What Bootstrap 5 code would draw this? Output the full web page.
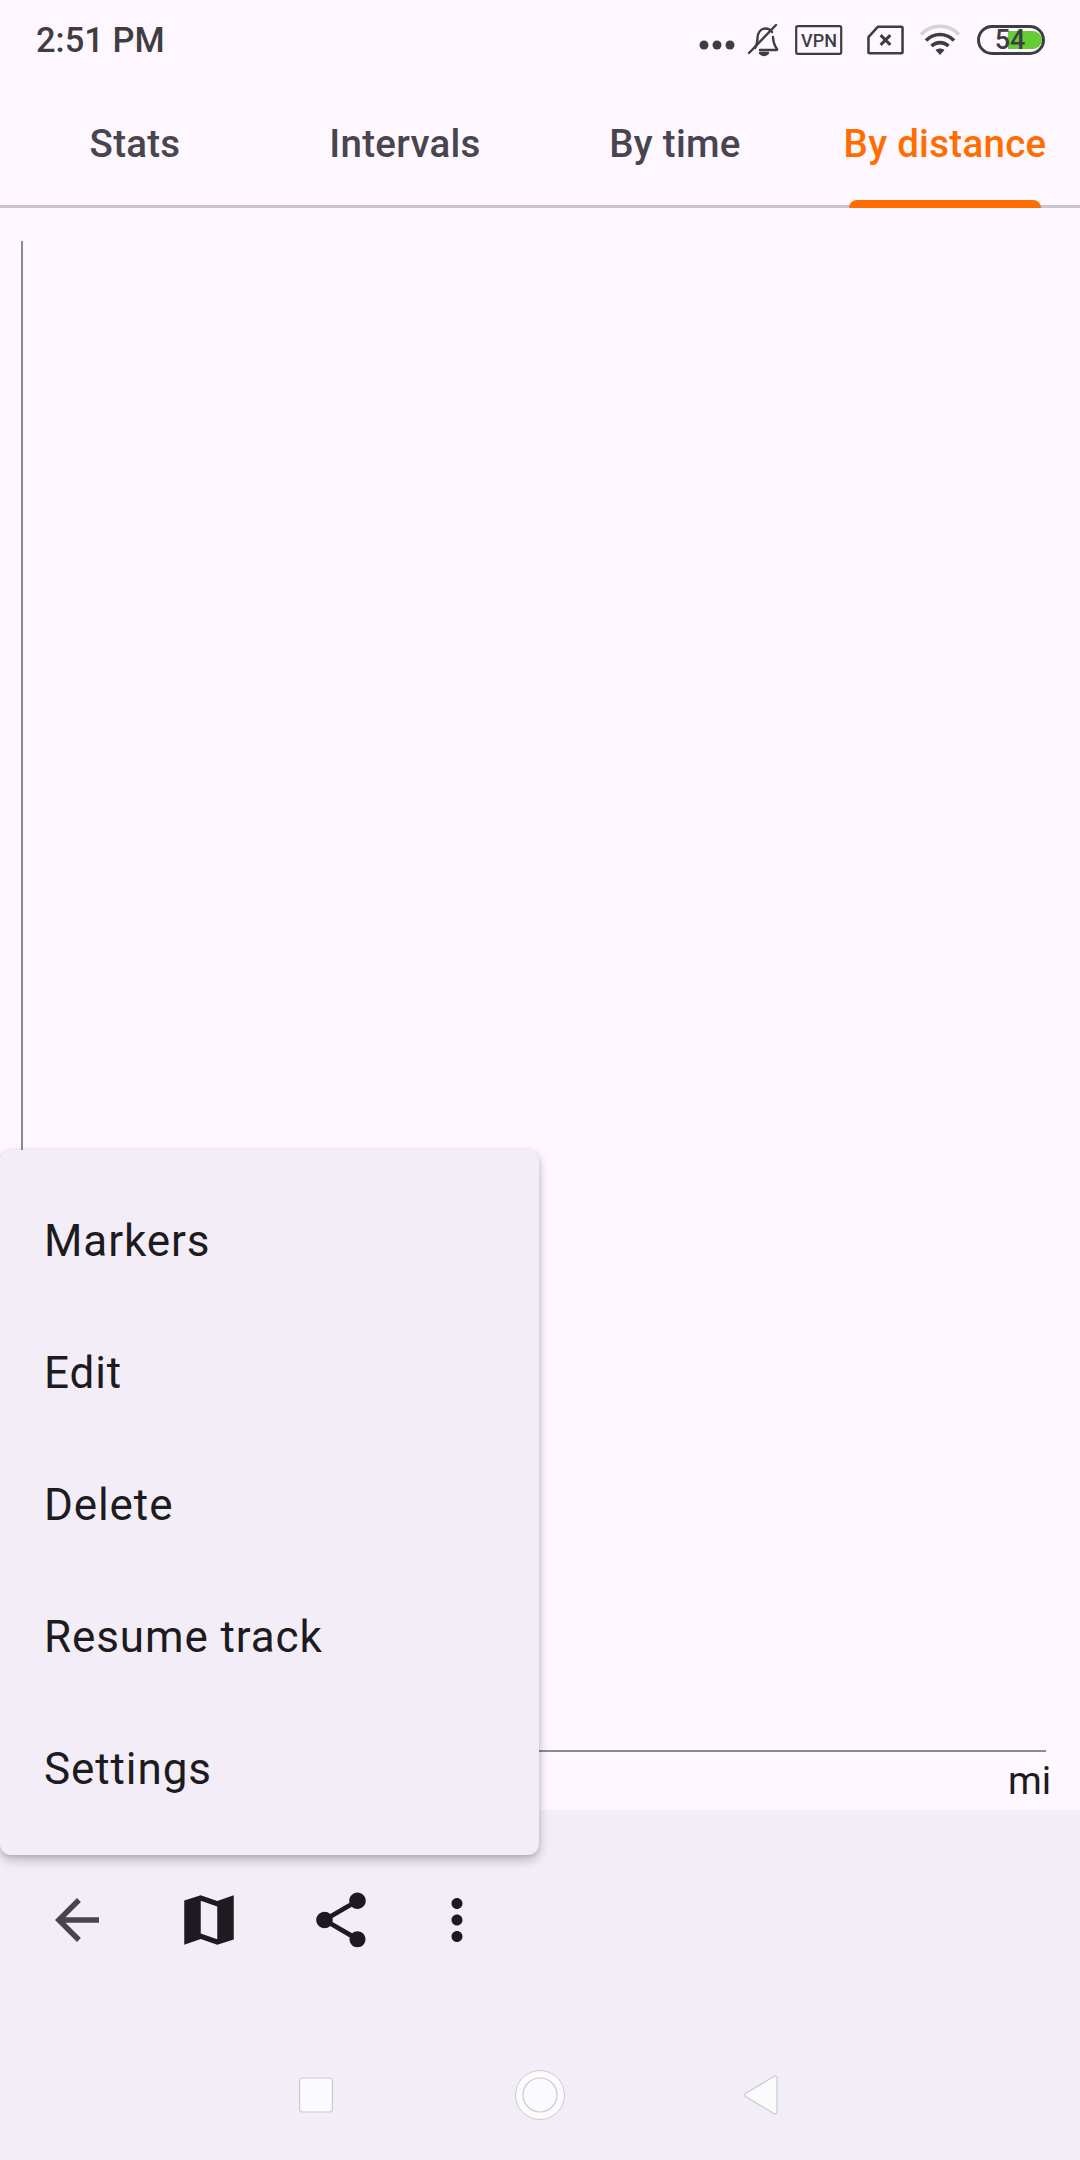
<!DOCTYPE html>
<html lang="en">
<head>
    <meta charset="UTF-8">
    <meta name="viewport" content="width=device-width, initial-scale=1.0">
    <link href="https://cdn.jsdelivr.net/npm/bootstrap@5.3.0/dist/css/bootstrap.min.css" rel="stylesheet">
    <title>Track details</title>
    <style>
        body {
            background-color: #fef7ff;
            font-family: Roboto, "Liberation Sans", sans-serif;
            color: #1d1b20;
        }
        .app-screen { width: 1080px; height: 2160px; overflow: hidden; }

        /* status bar */
        .status-bar { height: 80px; padding: 0 36px; color: #3f3d42; }
        .status-time { font-size: 34.5px; font-weight: 500; line-height: 1; }
        .status-icons { margin-right: -1px; }
        .status-icons svg { display: block; }
        .status-label { font-family: Roboto, sans-serif; font-weight: 500; fill: #3f3d42; }
        .icon-bell { margin-left: 4px; }
        .icon-vpn { margin-left: 14px; }
        .icon-sim { margin-left: 24px; }
        .icon-wifi { margin-left: 15px; }
        .icon-battery { margin-left: 16px; }

        /* tabs */
        .track-tabs { height: 128px; border-bottom: 3px solid #cac4d0; flex-wrap: nowrap; }
        .track-tabs .nav-link {
            color: #49454f;
            font-size: 38.5px;
            font-weight: 500;
            letter-spacing: .275px;
            line-height: 1;
            padding: 4px 0 0;
            height: 125px;
            display: flex;
            align-items: center;
            justify-content: center;
            position: relative;
        }
        .track-tabs .nav-link.active { color: #ff6d00; }
        .track-tabs .nav-link.active::after {
            content: "";
            position: absolute;
            left: 39px;
            right: 39px;
            bottom: -3px;
            height: 8px;
            background: #ff6d00;
            border-radius: 8px 8px 0 0;
        }

        /* chart */
        .chart-area { height: 1602px; padding: 33px 34px 0 21px; }
        .chart-plot { height: 1511px; border-left: 2px solid #8e8a92; border-bottom: 2px solid #8e8a92; }
        .chart-unit { font-size: 38.5px; line-height: 1; margin-right: -5px; padding-top: 10px; }

        /* overflow menu */
        .overflow-menu {
            top: 1150px;
            left: 0;
            width: 539px;
            height: 705px;
            padding-top: 25px;
            background: #f3edf7;
            border-radius: 11px;
            box-shadow: 0 5px 11px rgba(0, 0, 0, .24), 0 1px 4px rgba(0, 0, 0, .1);
            z-index: 5;
        }
        .overflow-menu .list-group-item {
            height: 132px;
            display: flex;
            align-items: center;
            padding: 0 0 0 44px;
            background: transparent;
            border: 0;
            color: #1d1b20;
            font-size: 44px;
            letter-spacing: .9px;
        }

        /* bottom */
        .bottom-area { height: 350px; background: #f3edf7; }
        .tool-row { padding: 44px 0 0 11px; }
        .tool-btn { width: 132px; height: 132px; padding: 0; border: 0; background: none; }
        .tool-btn-narrow { width: 99px; }
        .tool-btn svg { display: block; margin: auto; fill: #1d1b20; }
        .tool-btn .back-icon { fill: #49454f; }
        .sys-nav { margin-top: 79px; padding-right: 3px; height: 60px; }
        .sys-nav svg { display: block; fill: #fbfbfd; stroke: #cdc8d0; stroke-width: 1.2; }
        .sys-gap-a { margin-left: 182px; }
        .sys-gap-b { margin-left: 179px; }
    </style>
</head>
<body class="m-0">
    <div class="app-screen position-relative d-flex flex-column">

        <div class="status-bar d-flex align-items-center justify-content-between">
            <div class="status-time">2:51 PM</div>
            <div class="status-icons d-flex align-items-center">
                <!-- dots -->
                <svg width="36" height="32" viewBox="0 0 36 32" fill="#3f3d42" class="me-2 mt-1">
                    <circle cx="5" cy="19" r="4.5"/><circle cx="18" cy="19" r="4.5"/><circle cx="31" cy="19" r="4.5"/>
                </svg>
                <!-- muted bell -->
                <svg class="icon-bell" width="34" height="34" viewBox="0 0 34 34" fill="none" stroke="#3f3d42" stroke-width="2.4" stroke-linecap="round" stroke-linejoin="round">
                    <path d="M8 25c2-3 2.500-6 2.500-10 0-5 3-9.500 8-9.500 3 0 5 1.200 6.500 3.500M26 14c.2 5 1 8 4 12 .4.600 0 1-.6 1H13"/>
                    <path d="M2 30 29 2"/>
                    <path d="M13 30c2 2.600 6 2.600 8 0z" fill="#3f3d42"/>
                </svg>
                <!-- vpn -->
                <svg class="icon-vpn" width="48" height="30" viewBox="0 0 48 30">
                    <rect x="1.200" y="1.200" width="45" height="27.600" rx="1.500" fill="none" stroke="#3f3d42" stroke-width="2.200"/>
                    <text x="24" y="21.500" text-anchor="middle" font-size="18" class="status-label">VPN</text>
                </svg>
                <!-- sim -->
                <svg class="icon-sim" width="37" height="30" viewBox="0 0 38 30" fill="none" stroke="#3f3d42" stroke-width="2.600" stroke-linejoin="round">
                    <path d="M1.500 12 11 1.500h24.500a1 1 0 0 1 1 1v25a1 1 0 0 1-1 1H2.500a1 1 0 0 1-1-1z"/>
                    <path d="M14 10l10 10M24 10 14 20" stroke-width="3"/>
                </svg>
                <!-- wifi -->
                <svg class="icon-wifi" width="42" height="32" viewBox="0 0 42 32" fill="none" stroke-width="3.600">
                    <path d="M2 10.500C12-.5 30-.5 40 10.500" stroke="#d6d3d6"/>
                    <path d="M7 16.500c8-8 20-8 28 0" stroke="#3f3d42"/>
                    <path d="M12.500 22c5-4.500 12-4.500 17 0" stroke="#3f3d42"/>
                    <path d="M16.500 26c2.500-2 6.500-2 9 0L21 31z" fill="#3f3d42"/>
                </svg>
                <!-- battery -->
                <svg class="icon-battery" width="68" height="30" viewBox="0 0 68 30">
                    <path d="M31 6h25a9 9 0 0 1 0 18H31z" fill="#66cc33"/>
                    <rect x="1.500" y="1.500" width="65" height="27" rx="13.500" fill="none" stroke="#3f3d42" stroke-width="3"/>
                    <text x="33" y="24" text-anchor="middle" font-size="27" class="status-label">54</text>
                </svg>
            </div>
        </div>

        <ul class="nav nav-justified track-tabs">
            <li class="nav-item"><a class="nav-link" href="#">Stats</a></li>
            <li class="nav-item"><a class="nav-link" href="#">Intervals</a></li>
            <li class="nav-item"><a class="nav-link" href="#">By time</a></li>
            <li class="nav-item"><a class="nav-link active" href="#">By distance</a></li>
        </ul>

        <div class="chart-area">
            <div class="chart-plot"></div>
            <div class="chart-unit text-end">mi</div>
        </div>

        <div class="bottom-area">
            <div class="tool-row d-flex">
                <button class="tool-btn" type="button" aria-label="Back">
                    <svg class="back-icon" width="66" height="66" viewBox="0 0 24 24"><path d="M20 11H7.830l5.590-5.590L12 4l-8 8 8 8 1.410-1.410L7.830 13H20v-2z"/></svg>
                </button>
                <button class="tool-btn" type="button" aria-label="Map">
                    <svg width="66" height="66" viewBox="0 0 24 24"><path fill-rule="evenodd" d="M3 4.900 9 3l6 2.100L21 3v16.100L15 21l-6-2.100L3 21zM9 5v11.900l6 2.100V7.100z"/></svg>
                </button>
                <button class="tool-btn" type="button" aria-label="Share">
                    <svg width="66" height="66" viewBox="0 0 24 24"><path d="M18 16.080c-.76 0-1.440.3-1.960.77L8.910 12.700c.05-.23.09-.46.09-.7s-.04-.47-.09-.7l7.050-4.110c.54.5 1.250.81 2.040.81 1.660 0 3-1.340 3-3s-1.340-3-3-3-3 1.340-3 3c0 .24.04.47.09.7L8.040 9.810C7.500 9.310 6.790 9 6 9c-1.660 0-3 1.340-3 3s1.340 3 3 3c.79 0 1.500-.31 2.040-.81l7.120 4.160c-.05.21-.08.43-.08.65 0 1.610 1.310 2.920 2.920 2.920 1.610 0 2.920-1.310 2.920-2.920s-1.310-2.920-2.920-2.920z"/></svg>
                </button>
                <button class="tool-btn tool-btn-narrow" type="button" aria-label="More">
                    <svg width="66" height="66" viewBox="0 0 24 24"><path d="M12 8c1.100 0 2-.9 2-2s-.9-2-2-2-2 .9-2 2 .9 2 2 2zm0 2c-1.100 0-2 .9-2 2s.9 2 2 2 2-.9 2-2-.9-2-2-2zm0 6c-1.100 0-2 .9-2 2s.9 2 2 2 2-.9 2-2-.9-2-2-2z"/></svg>
                </button>
            </div>
            <div class="sys-nav d-flex justify-content-center align-items-center">
                <svg width="34" height="36" viewBox="0 0 34 36"><rect x=".6" y="1" width="32.800" height="34" rx="3"/></svg>
                <svg class="sys-gap-a" width="50" height="52" viewBox="0 0 50 52"><circle cx="25" cy="26" r="24.500" stroke-width="1"/><circle cx="25" cy="26" r="17"/></svg>
                <svg class="sys-gap-b" width="34" height="40" viewBox="0 0 34 40"><path d="M1.500 18.500 30 1.500c1.400-.8 3-.2 3 1.500v34c0 1.700-1.600 2.300-3 1.500L1.500 21.500c-1.200-.7-1.200-2.300 0-3z"/></svg>
            </div>
        </div>

        <div class="overflow-menu position-absolute">
            <div class="list-group list-group-flush">
                <a class="list-group-item" href="#">Markers</a>
                <a class="list-group-item" href="#">Edit</a>
                <a class="list-group-item" href="#">Delete</a>
                <a class="list-group-item" href="#">Resume track</a>
                <a class="list-group-item" href="#">Settings</a>
            </div>
        </div>
    </div>

    <script src="https://cdn.jsdelivr.net/npm/bootstrap@5.3.0/dist/js/bootstrap.bundle.min.js"></script>
</body>
</html>
